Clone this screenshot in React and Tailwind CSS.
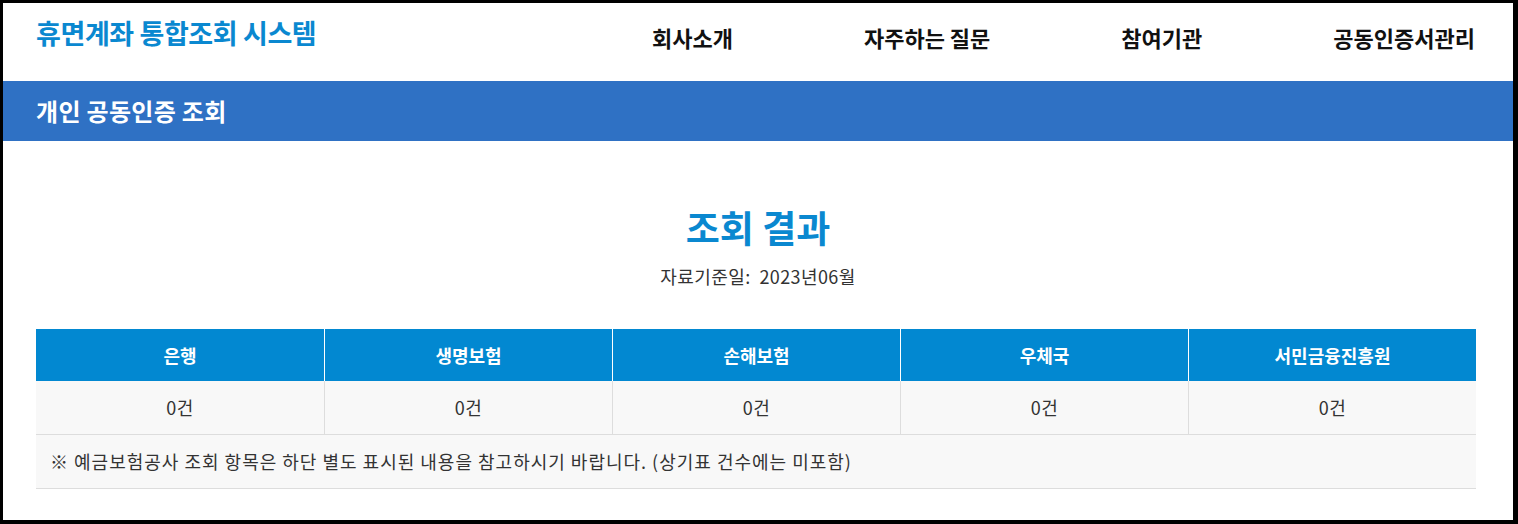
import React from "react";

const FONT = { fontFamily: '"Noto Sans CJK KR", "Noto Sans", sans-serif' };

const navItems = ["회사소개", "자주하는 질문", "참여기관", "공동인증서관리"];

const results = [
  { name: "은행", count: "0건" },
  { name: "생명보험", count: "0건" },
  { name: "손해보험", count: "0건" },
  { name: "우체국", count: "0건" },
  { name: "서민금융진흥원", count: "0건" },
];

function Header() {
  return (
    <header className="flex h-[78px] items-start bg-white pl-[33px] pr-[38px]">
      <h1 className="mt-[11px] text-[27px] font-bold leading-[38px] tracking-[-0.4px] text-[#0a88d0]">
        휴면계좌 통합조회 시스템
      </h1>
      <nav className="ml-auto mt-[17px] flex items-center gap-[131px] text-[22px] font-bold leading-[34px] text-[#111]">
        {navItems.map((item) => (
          <a key={item} href="#" className="whitespace-nowrap">
            {item}
          </a>
        ))}
      </nav>
    </header>
  );
}

export default function App() {
  return (
    <div
      className="box-border flex h-[524px] w-[1518px] flex-col overflow-hidden border-t-[3px] border-r-[5px] border-b-[4px] border-l-[3px] border-black bg-white"
      style={FONT}
    >
      <Header />

      {/* Page title bar */}
      <div className="flex h-[60px] items-center bg-[#2f71c4] pl-[33px]">
        <h2 className="text-[24px] font-bold tracking-[0.3px] text-white">개인 공동인증 조회</h2>
      </div>

      {/* Result */}
      <div className="flex flex-col items-center pt-[59px]">
        <h3 className="text-[37px] font-bold leading-[54px] text-[#0a88d0]">조회 결과</h3>
        <p className="mt-[9px] text-[18px] leading-[26px] tracking-[0.4px] text-[#333]">
          자료기준일:&nbsp;&nbsp;2023년06월
        </p>
      </div>

      <div className="ml-[33px] mr-[37px] mt-[40px]">
        <div className="grid grid-cols-5 bg-[#0288d1]">
          {results.map((r, i) => (
            <div
              key={r.name}
              className={`flex h-[52px] items-center justify-center text-[18px] font-bold text-white ${
                i > 0 ? "border-l border-white" : ""
              }`}
            >
              {r.name}
            </div>
          ))}
        </div>
        <div className="grid grid-cols-5 border-b border-[#dddddd] bg-[#f8f8f8]">
          {results.map((r, i) => (
            <div
              key={r.name}
              className={`flex h-[53px] items-center justify-center text-[18px] tracking-[0.5px] text-[#333] ${
                i > 0 ? "border-l border-[#dddddd]" : ""
              }`}
            >
              {r.count}
            </div>
          ))}
        </div>
        <div className="flex h-[54px] items-center border-b border-[#dddddd] bg-[#f8f8f8] px-[14px] text-[18px] tracking-[1px] text-[#333]">
          ※ 예금보험공사 조회 항목은 하단 별도 표시된 내용을 참고하시기 바랍니다. (상기표 건수에는 미포함)
        </div>
      </div>
    </div>
  );
}
